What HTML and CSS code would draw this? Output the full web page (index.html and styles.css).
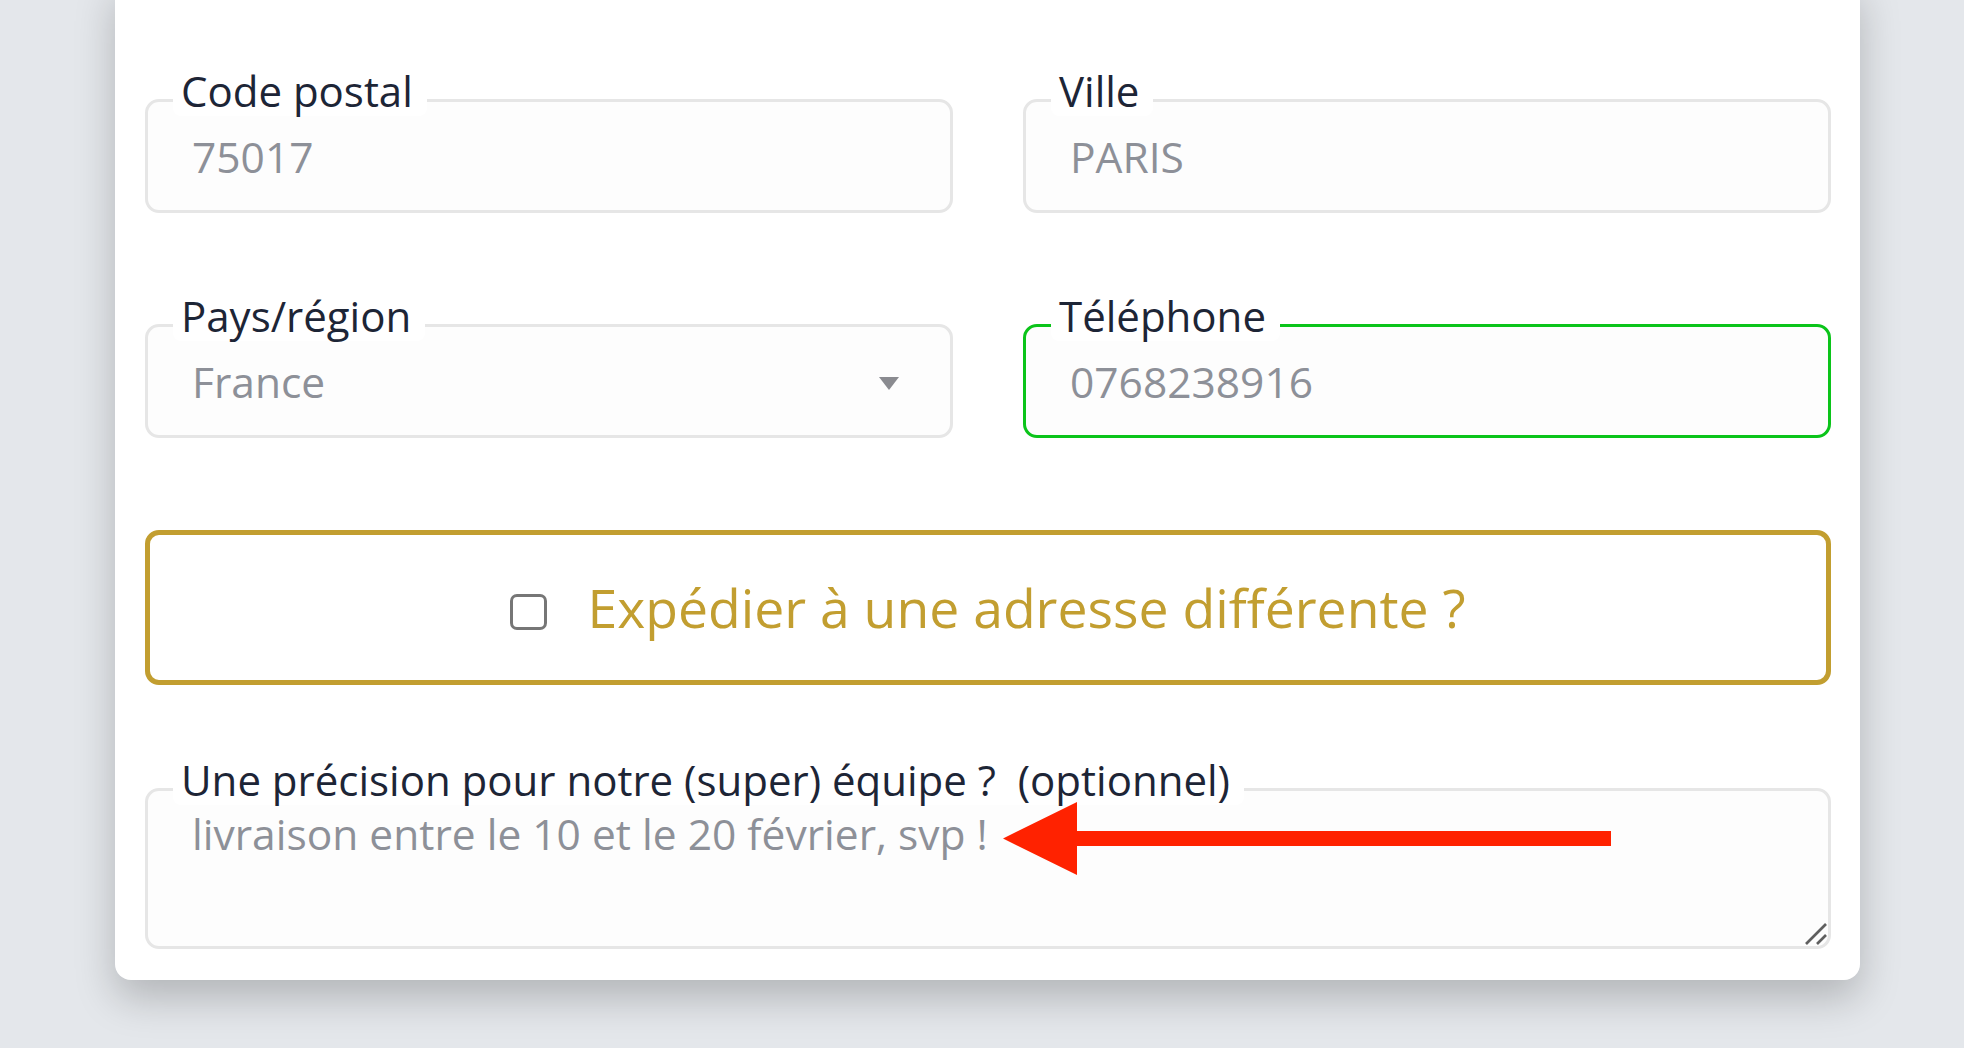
FILE: index.html
```html
<!DOCTYPE html>
<html lang="fr">
<head>
  <meta charset="UTF-8" />
  <meta name="viewport" content="width=device-width, initial-scale=1.0"/>
  <title>Commande</title>
  <link rel="stylesheet" href="styles.css">
</head>
<body>
  <div class="page">
    <form class="card">
      <div class="grid">
        <div class="field">
          <label for="zip" class="field-label">Code postal</label>
          <input type="text" id="zip" class="field-input" value="75017" />
        </div>
        <div class="field">
          <label for="city" class="field-label">Ville</label>
          <input type="text" id="city" class="field-input" value="PARIS" />
        </div>
        <div class="field">
          <label for="country" class="field-label">Pays/région</label>
          <select id="country" class="field-input">
            <option>France</option>
          </select>
          <span class="caret"></span>
        </div>
        <div class="field">
          <label for="phone" class="field-label">Téléphone</label>
          <input type="tel" id="phone" class="field-input is-valid" value="0768238916" />
        </div>
      </div>

      <label class="ship-box" for="ship">
        <input type="checkbox" id="ship" class="ship-check" />
        <span class="ship-text">Expédier à une adresse différente ?</span>
      </label>

      <div class="field notes">
        <label for="notes" class="field-label">Une précision pour notre (super) équipe ?&nbsp; (optionnel)</label>
        <textarea id="notes" class="field-input notes-input">livraison entre le 10 et le 20 février, svp !</textarea>
        <svg class="grip" width="22" height="22" viewBox="0 0 22 22">
          <line x1="21" y1="1" x2="1" y2="21" stroke="#5f5f5f" stroke-width="2.6"/>
          <line x1="21" y1="12" x2="12" y2="21" stroke="#5f5f5f" stroke-width="2.6"/>
        </svg>
        <!-- annotation arrow -->
        <svg class="arrow" width="608" height="73" viewBox="0 0 608 73">
          <polygon points="0,36.5 74,0 74,29 608,29 608,44 74,44 74,73" fill="#ff2200"/>
        </svg>
      </div>
    </form>
  </div>
</body>
</html>
```

FILE: styles.css
```css
html, body {
  height: 100%;
}

body {
  margin: 0;
  background: #e4e7eb;
  font-family: "Open Sans", "Noto Sans", sans-serif;
}

.page {
  height: 100%;
  box-sizing: border-box;
  padding: 0 104px 0 115px;
  overflow: hidden;
}

.card {
  position: relative;
  margin-top: -20px;
  background: #fff;
  border-radius: 0 0 16px 16px;
  padding: 119px 29px 31px 30px;
  box-shadow: 0 18px 40px rgba(0, 0, 0, 0.22);
}

.grid {
  display: grid;
  grid-template-columns: 1fr 1fr;
  column-gap: 70px;
  row-gap: 111px;
}

.field {
  position: relative;
}

.field-label {
  position: absolute;
  left: 28px;
  top: -33px;
  padding: 0 14px 0 8px;
  background: #fff;
  border-radius: 8px;
  color: #1d2536;
  font-size: 42px;
  font-weight: 500;
  line-height: 50px;
  white-space: nowrap;
}

.field-input {
  display: block;
  width: 100%;
  height: 114px;
  box-sizing: border-box;
  margin: 0;
  padding: 0 20px 0 44px;
  border: 3px solid #e6e6e6;
  border-radius: 14px;
  background: #fdfdfd;
  color: #8d9098;
  font-family: inherit;
  font-size: 42.5px;
  outline: none;
  appearance: none;
  -webkit-appearance: none;
}

.field-input.is-valid {
  border-color: #0bc41a;
}

.caret {
  position: absolute;
  right: 54px;
  top: 53px;
  width: 0;
  height: 0;
  border-left: 10.5px solid transparent;
  border-right: 10.5px solid transparent;
  border-top: 13px solid #8a8b90;
}

.ship-box {
  display: flex;
  align-items: center;
  justify-content: center;
  gap: 40px;
  height: 155px;
  box-sizing: border-box;
  margin-top: 92px;
  border: 5px solid #c29e30;
  border-radius: 14px;
}

.ship-check {
  appearance: none;
  -webkit-appearance: none;
  width: 37px;
  height: 36px;
  margin: 8px 0 0;
  box-sizing: border-box;
  border: 3px solid #767676;
  border-radius: 7px;
  background: #fff;
}

.ship-text {
  color: #c29e30;
  font-size: 53.5px;
  font-weight: 500;
}

.notes {
  margin-top: 103px;
}

.notes-input {
  height: 161px;
  padding-top: 14px;
  resize: none;
  line-height: 1.36;
}

.grip {
  position: absolute;
  right: 4px;
  bottom: 4px;
}

.arrow {
  position: absolute;
  left: 858px;
  top: 14px;
}
```
